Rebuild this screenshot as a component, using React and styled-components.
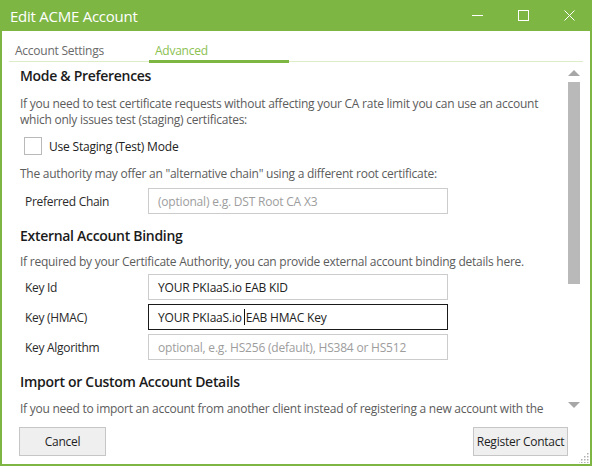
import React from 'react';
import styled, { createGlobalStyle, css } from 'styled-components';

const GREEN = '#7db643';
const FONT = '"Open Sans", "Noto Sans", sans-serif';

const GlobalStyle = createGlobalStyle`
  * { box-sizing: border-box; }
  body {
    margin: 0;
    background: #fff;
    font-family: ${FONT};
  }
`;

const Window = styled.div`
  position: relative;
  width: 592px;
  height: 466px;
  display: flex;
  flex-direction: column;
  background: ${GREEN};
  padding: 0 2px 2px 2px;
  overflow: hidden;
`;

const TitleBar = styled.div`
  height: 31px;
  margin: 0 -2px;
  display: flex;
  align-items: center;
  color: #fff;
`;

const Title = styled.div`
  flex: 1;
  padding: 1px 0 0 10px;
  font-size: 15px;
  letter-spacing: -0.25px;
  line-height: 30px;
`;

const Control = styled.div`
  width: 46px;
  height: 31px;
  display: flex;
  align-items: center;
  justify-content: center;
`;

const Body = styled.div`
  flex: 1;
  min-height: 0;
  display: flex;
  flex-direction: column;
  background: #fff;
  padding-left: 7px;
`;

const Tabs = styled.div`
  display: flex;
  height: 31px;
  margin-right: 7px;
  border-bottom: 1px solid #dcedc8;
`;

const Tab = styled.div`
  width: 140px;
  height: 32px;
  margin-bottom: -2px;
  padding: 10px 0 0 6px;
  display: flex;
  align-items: center;
  font-size: 12px;
  letter-spacing: -0.25px;
  color: #6a6a6a;
  border-bottom: 3px solid transparent;

  ${({ active }) =>
    active &&
    css`
      color: #8cc152;
      border-bottom-color: ${GREEN};
    `}
`;

const Main = styled.div`
  flex: 1;
  min-height: 0;
  display: flex;
`;

const Scroller = styled.div`
  flex: 1;
  min-width: 0;
  overflow: hidden;
  padding: 4px 0 0 11px;
`;

const Heading = styled.h2`
  margin: ${({ top }) => top || 0}px 0 0 0;
  font-size: 14px;
  font-weight: 600;
  line-height: 20px;
  color: #1b1b1b;
  letter-spacing: -0.3px;
`;

const Para = styled.p`
  margin: ${({ top }) => top || 0}px 0 0 0;
  font-size: 12px;
  line-height: 16px;
  color: #5c5c5c;
  letter-spacing: -0.25px;
  white-space: nowrap;
`;

const CheckRow = styled.label`
  display: flex;
  align-items: center;
  gap: 7px;
  margin: 9px 0 0 4px;
  height: 18px;
  font-size: 12px;
  letter-spacing: -0.2px;
  color: #222;
`;

const Box = styled.span`
  width: 18px;
  height: 18px;
  border: 1px solid #b9b9b9;
  background: #fff;
`;

const Fields = styled.div`
  display: flex;
  flex-direction: column;
  gap: 4px;
  margin-top: ${({ top }) => top || 0}px;
`;

const Field = styled.div`
  display: flex;
  align-items: center;
  height: 26px;
`;

const Label = styled.div`
  width: 128px;
  padding-left: 5px;
  font-size: 12px;
  letter-spacing: -0.3px;
  color: #2b2b2b;
`;

const Input = styled.div`
  width: 300px;
  height: 100%;
  display: flex;
  align-items: center;
  padding-left: 9px;
  border: 1px solid ${({ focused }) => (focused ? '#1a1a1a' : '#cccccc')};
  font-size: 12px;
  letter-spacing: -0.2px;
  color: ${({ placeholder }) => (placeholder ? '#9d9d9d' : '#222')};
  white-space: nowrap;
`;

const Caret = styled.span`
  display: inline-block;
  width: 1px;
  height: 16px;
  margin: 0 1px 0 2px;
  background: #111;
  vertical-align: middle;
`;

const ScrollTrack = styled.div`
  width: 13px;
  margin: 0 10px 2px 0;
  display: flex;
  flex-direction: column;
  align-items: center;
  padding: 8px 0 8px;
`;

const Thumb = styled.div`
  width: 12px;
  height: 202px;
  margin-top: 6px;
  background: #b9b9b9;
`;

const Spacer = styled.div`
  flex: 1;
`;

const Footer = styled.div`
  height: 46px;
  display: flex;
  justify-content: space-between;
  padding: 9px 22px 0 10px;
`;

const Button = styled.div`
  width: ${({ w }) => w}px;
  height: 29px;
  display: flex;
  align-items: center;
  justify-content: center;
  background: #efefef;
  border: 1px solid #c6c6c6;
  font-size: 12px;
  letter-spacing: -0.25px;
  color: #1e1e1e;
`;

const Grip = styled.svg`
  position: absolute;
  right: 3px;
  bottom: 3px;
`;

const Arrow = ({ up }) => (
  <svg width="12" height="6" viewBox="0 0 12 6">
    <path d={up ? 'M0 6 L6 0 L12 6 Z' : 'M0 0 L12 0 L6 6 Z'} fill="#a7a7a7" />
  </svg>
);

const App = () => (
  <>
    <GlobalStyle />
    <Window>
      <TitleBar>
        <Title>Edit ACME Account</Title>
        <Control>
          <svg width="11" height="11" viewBox="0 0 11 11">
            <path d="M0 5.5 H11" stroke="#fff" strokeWidth="1" />
          </svg>
        </Control>
        <Control>
          <svg width="11" height="11" viewBox="0 0 11 11">
            <rect x="0.5" y="0.5" width="10" height="10" fill="none" stroke="#fff" strokeWidth="1" />
          </svg>
        </Control>
        <Control>
          <svg width="11" height="11" viewBox="0 0 11 11">
            <path d="M0.5 0.5 L10.5 10.5 M10.5 0.5 L0.5 10.5" stroke="#fff" strokeWidth="1" />
          </svg>
        </Control>
      </TitleBar>
      <Body>
        <Tabs>
          <Tab>Account Settings</Tab>
          <Tab active>Advanced</Tab>
        </Tabs>
        <Main>
          <Scroller>
            <Heading>Mode &amp; Preferences</Heading>
            <Para top={10}>
              If you need to test certificate requests without affecting your CA rate limit you can use an account
              <br />
              which only issues test (staging) certificates:
            </Para>
            <CheckRow>
              <Box />
              Use Staging (Test) Mode
            </CheckRow>
            <Para top={11}>The authority may offer an "alternative chain" using a different root certificate:</Para>
            <Fields top={6}>
              <Field>
                <Label>Preferred Chain</Label>
                <Input placeholder>(optional) e.g. DST Root CA X3</Input>
              </Field>
            </Fields>
            <Heading top={12}>External Account Binding</Heading>
            <Para top={8}>
              If required by your Certificate Authority, you can provide external account binding details here.
            </Para>
            <Fields top={4}>
              <Field>
                <Label>Key Id</Label>
                <Input>YOUR PKIaaS.io EAB KID</Input>
              </Field>
              <Field>
                <Label>Key (HMAC)</Label>
                <Input focused>
                  YOUR PKIaaS.io<Caret />EAB HMAC Key
                </Input>
              </Field>
              <Field>
                <Label>Key Algorithm</Label>
                <Input placeholder>optional, e.g. HS256 (default), HS384 or HS512</Input>
              </Field>
            </Fields>
            <Heading top={12}>Import or Custom Account Details</Heading>
            <Para top={9}>
              If you need to import an account from another client instead of registering a new account with the
            </Para>
          </Scroller>
          <ScrollTrack>
            <Arrow up />
            <Thumb />
            <Spacer />
            <Arrow />
          </ScrollTrack>
        </Main>
        <Footer>
          <Button w={87}>Cancel</Button>
          <Button w={95}>Register Contact</Button>
        </Footer>
      </Body>
      <Grip width="10" height="10" viewBox="0 0 10 10">
        {[
          [8, 0], [8, 3], [5, 3], [8, 6], [5, 6], [2, 6], [8, 9], [5, 9], [2, 9], [-1, 9],
        ].map(([x, y]) => (
          <rect key={`${x}-${y}`} x={x} y={y} width="1.5" height="1.5" fill="#b0b0b0" />
        ))}
      </Grip>
    </Window>
  </>
);

export default App;
